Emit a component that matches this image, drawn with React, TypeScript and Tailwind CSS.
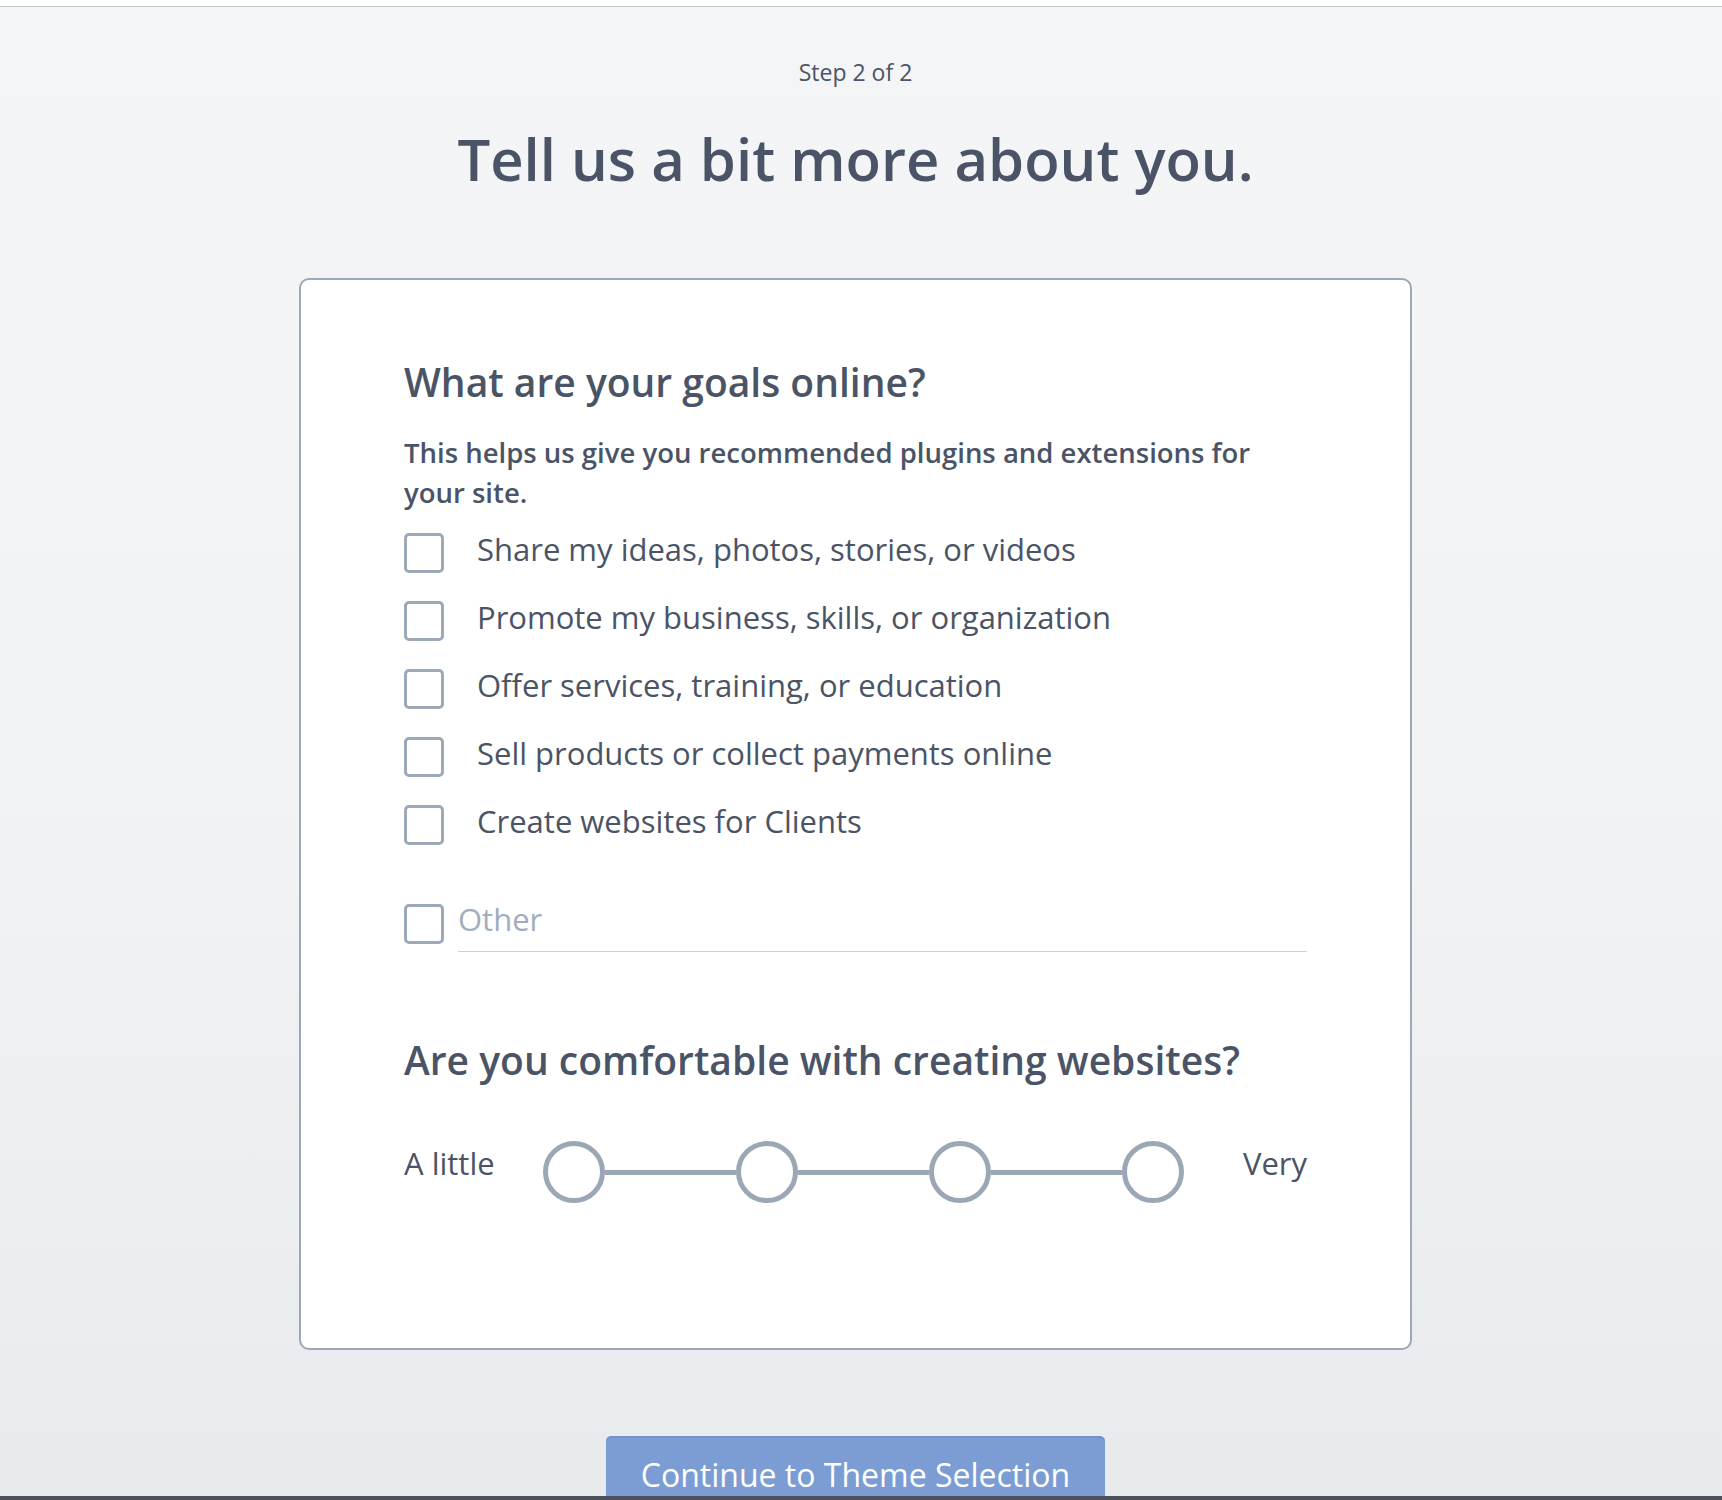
const goals = [
  "Share my ideas, photos, stories, or videos",
  "Promote my business, skills, or organization",
  "Offer services, training, or education",
  "Sell products or collect payments online",
  "Create websites for Clients",
];

const Checkbox = () => (
  <div className="size-[40px] shrink-0 rounded-[5px] border-[3px] border-[#9ba9b9] bg-white" />
);

const Slider = () => {
  const steps = [0, 1, 2, 3];
  return (
    <div className="ml-[48px] flex items-center">
      {steps.map((s) => (
        <div key={s} className="flex items-center">
          {s > 0 && <div className="h-[5px] w-[131px] bg-[#9ba7b5]" />}
          <div className="size-[62px] shrink-0 rounded-full border-[5px] border-[#9ba7b5] bg-white" />
        </div>
      ))}
    </div>
  );
};

const App = () => {
  return (
    <div className="flex h-[1500px] flex-col overflow-hidden font-['Open_Sans',sans-serif] text-[#4a5466]">
      <div className="h-[7px] shrink-0 border-b border-[#c5c9ce] bg-white" />
      <div className="flex h-[1489px] flex-col items-center overflow-hidden bg-gradient-to-b from-[#f4f5f7] via-[#f2f3f5] to-[#e8ebee] pr-[11px]">
        <p className="mt-[51px] text-[23px] leading-[28px]">Step 2 of 2</p>
        <h1 className="mt-[37px] text-[58px] font-semibold leading-[72px]">
          Tell us a bit more about you.
        </h1>

        <div className="mt-[83px] w-[1113px] shrink-0 rounded-[10px] border-2 border-[#9ba8b7] bg-white px-[103px] pb-[145px] pt-[78px]">
          <h2 className="text-[39px] font-semibold leading-[48px]">What are your goals online?</h2>
          <p className="mt-[27px] text-[27.5px] font-semibold leading-[40px]">
            This helps us give you recommended plugins and extensions for your site.
          </p>

          <div className="mt-[20px] flex flex-col gap-[28px]">
            {goals.map((g) => (
              <label key={g} className="flex h-[40px] items-center">
                <Checkbox />
                <span className="-mt-[8px] ml-[33px] text-[31px] leading-[40px]">{g}</span>
              </label>
            ))}
          </div>

          <div className="mt-[59px] flex items-start">
            <Checkbox />
            <div className="ml-[14px] h-[48px] flex-1 border-b border-[#cdd2d8]">
              <span className="-mt-[5px] block text-[31px] leading-[40px] text-[#a0adbd]">Other</span>
            </div>
          </div>

          <h2 className="mt-[84px] text-[39px] font-semibold leading-[48px]">
            Are you comfortable with creating websites?
          </h2>

          <div className="mt-[57px] flex h-[62px] items-center">
            <span className="-mt-[18px] text-[31px] leading-[40px]">A little</span>
            <Slider />
            <span className="-mt-[18px] ml-auto text-[31px] leading-[40px]">Very</span>
          </div>
        </div>

        <button className="mt-[86px] w-[499px] shrink-0 rounded-[5px] border-t-2 border-[#6f92cf] bg-[#7b9dd4] pb-5 pt-[17px] text-[32px] leading-[40px] text-white">
          Continue to Theme Selection
        </button>
      </div>
      <div className="h-[4px] shrink-0 bg-[#4b5059]" />
    </div>
  );
};

export default App;
